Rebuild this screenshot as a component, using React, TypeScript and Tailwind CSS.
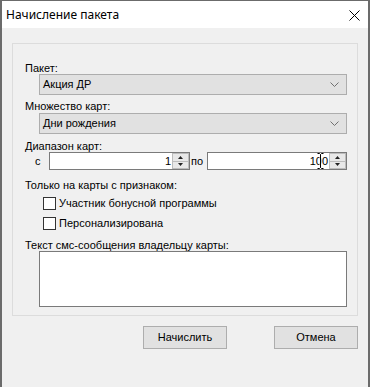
import React from 'react';

const font = { fontFamily: '"Liberation Sans", Arial, sans-serif' };

const Chevron = () => (
  <svg width="9" height="5" viewBox="0 0 9 5" className="mr-[7px]">
    <path d="M0.5 0.5 L4.5 4.5 L8.5 0.5" fill="none" stroke="#707070" strokeWidth="1" />
  </svg>
);

const Combo: React.FC<{ value: string }> = ({ value }) => (
  <div className="ml-[26px] w-[308px] h-[21px] flex items-center justify-between bg-[#e1e1e1] border border-[#adadad]">
    <span className="pl-[3px] text-[11px] leading-[13px] text-black">{value}</span>
    <Chevron />
  </div>
);

const Spin = () => (
  <div className="w-[17px] h-full flex flex-col">
    <div className="flex-1 flex items-center justify-center bg-[#e8e8e8] border border-[#bcbcbc]">
      <svg width="5" height="3" viewBox="0 0 5 3">
        <path d="M0 3 L2.5 0 L5 3 Z" fill="#222" />
      </svg>
    </div>
    <div className="flex-1 flex items-center justify-center bg-[#e8e8e8] border border-t-0 border-[#bcbcbc]">
      <svg width="5" height="3" viewBox="0 0 5 3">
        <path d="M0 0 L2.5 3 L5 0 Z" fill="#222" />
      </svg>
    </div>
  </div>
);

const NumberBox: React.FC<{ value: string; width: string; cursor?: boolean }> = ({ value, width, cursor }) => (
  <div className={`relative ${width} h-full flex bg-white border border-[#7a7a7a]`}>
    <div className="flex-1 flex items-center justify-end pr-[1px] text-[11px] leading-[13px] text-black">{value}</div>
    <Spin />
    {cursor && (
      <svg width="7" height="16" viewBox="0 0 7 16" className="absolute right-[22px] top-0">
        <path d="M0.5 0.5 H2.5 L3.5 1.5 L4.5 0.5 H6.5 M3.5 1.5 V14.5 M0.5 15.5 H2.5 L3.5 14.5 L4.5 15.5 H6.5" fill="none" stroke="#fff" strokeWidth="2" />
        <path d="M0.5 0.5 H2.5 L3.5 1.5 L4.5 0.5 H6.5 M3.5 1.5 V14.5 M0.5 15.5 H2.5 L3.5 14.5 L4.5 15.5 H6.5" fill="none" stroke="#000" strokeWidth="1" />
      </svg>
    )}
  </div>
);

const Check: React.FC<{ label: string; className?: string }> = ({ label, className = '' }) => (
  <div className={`flex items-center h-[13px] ${className}`}>
    <div className="ml-[30px] w-[13px] h-[13px] bg-white border border-[#333333]" />
    <span className="ml-[3px] text-[11px] leading-[13px] text-black">{label}</span>
  </div>
);

const Label: React.FC<{ text: string; className?: string }> = ({ text, className = '' }) => (
  <div className={`pl-[12px] h-[12px] text-[11px] leading-[12px] text-black whitespace-nowrap ${className}`}>{text}</div>
);

const Button: React.FC<{ label: string; className?: string }> = ({ label, className = '' }) => (
  <div className={`w-[84px] h-[23px] flex items-center justify-center bg-[#e1e1e1] border border-[#adadad] text-[11px] leading-[13px] text-black ${className}`}>
    {label}
  </div>
);

export default function App() {
  return (
    <div className="w-[370px] h-[387px] flex flex-col border-t border-x-2 border-[#6b6b6b] bg-[#f0f0f0] overflow-hidden" style={font}>
      {/* Title bar */}
      <div className="h-[27px] flex items-center justify-between bg-white shrink-0">
        <span className="pl-[4px] text-[12px] text-black" style={{ fontFamily: '"Noto Sans", "Open Sans", sans-serif' }}>
          Начисление пакета
        </span>
        <svg width="11" height="11" viewBox="0 0 11 11" className="mr-[8px] mt-[2px]">
          <path d="M0.5 0.5 L10.5 10.5 M10.5 0.5 L0.5 10.5" stroke="#000" strokeWidth="1" />
        </svg>
      </div>

      {/* Group box */}
      <div className="mt-[15px] mx-[10px] h-[273px] border border-[#dcdcdc] flex flex-col">
        <Label text="Пакет:" className="mt-[18px]" />
        <Combo value="Акция ДР" />
        <Label text="Множество карт:" className="mt-[5px]" />
        <div className="mt-[1px]">
          <Combo value="Дни рождения" />
        </div>
        <Label text="Диапазон карт:" className="mt-[6px]" />
        <div className="h-[18px] flex items-center text-[11px] leading-[13px] text-black">
          <span className="ml-[22px] w-[14px]">с</span>
          <NumberBox value="1" width="w-[141px]" />
          <span className="w-[17px] pl-[1px]">по</span>
          <NumberBox value="100" width="w-[140px]" cursor />
        </div>
        <Label text="Только на карты с признаком:" className="mt-[9px]" />
        <Check label="Участник бонусной программы" className="mt-[6px]" />
        <Check label="Персонализирована" className="mt-[7px]" />
        <Label text="Текст смс-сообщения владельцу карты:" className="mt-[9px]" />
        <div className="ml-[26px] w-[308px] h-[56px] bg-white border border-[#7a7a7a]" />
      </div>

      {/* Buttons */}
      <div className="mt-[10px] flex">
        <Button label="Начислить" className="ml-[141px]" />
        <Button label="Отмена" className="ml-[47px]" />
      </div>
    </div>
  );
}
